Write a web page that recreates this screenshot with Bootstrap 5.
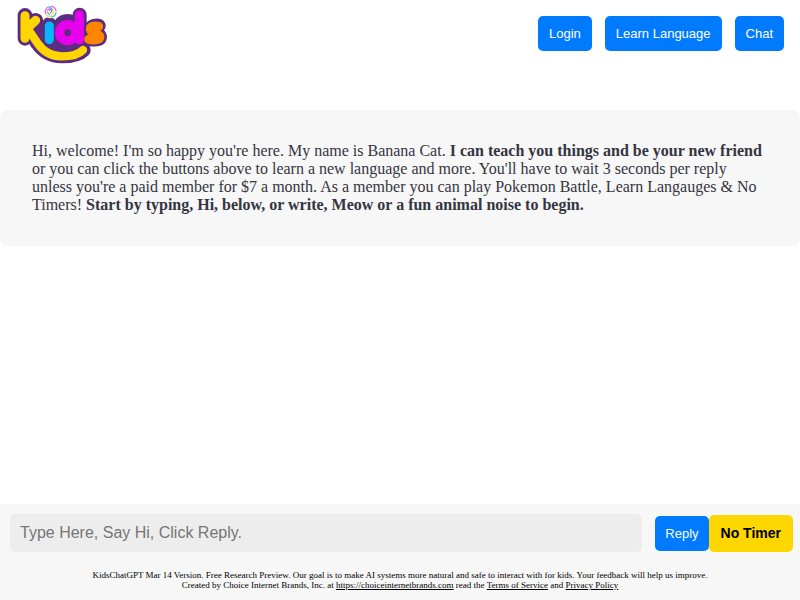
<!DOCTYPE html>
<html lang="en">
<head>
<meta charset="utf-8">
<meta name="viewport" content="width=device-width, initial-scale=1">
<title>KidsChatGPT</title>
<link href="https://cdn.jsdelivr.net/npm/bootstrap@5.3.0/dist/css/bootstrap.min.css" rel="stylesheet">
<style>
body { font-family: "Liberation Serif", "Times New Roman", serif; background: #fff; color: #000; }
.site-bar { padding: 0 16px 0 10px; min-height: 70px; }
.logo-art { width: 104px; height: 70px; }
.site-actions { gap: 13px; padding-top: 16px; }
.chat-btn { font: 13px/15px "Liberation Sans", Arial, sans-serif; color: #fff; background: #007bff; border: 0; border-radius: 5px; padding: 10px; white-space: nowrap; }
.site-actions .chat-btn { padding: 10px 11px; }
.chat-btn:hover { background: #0069d9; }
.timer-btn { font-size: 14px; line-height: 17px; font-weight: bold; color: #000; background: gold; padding: 10px 12px; }
.timer-btn:hover { background: #f0ca00; }
.welcome { margin-top: 40px; background: #f7f7f7; color: #343541; border-radius: 8px; padding: 32px; font-size: 16px; line-height: 18px; }
.composer { background: #f7f7f7; padding: 10px 0; }
.composer-row { padding: 0 7px 0 10px; }
.message-box { font: 16px/18px "Liberation Sans", Arial, sans-serif; background: #ededed; border: 0; border-radius: 5px; padding: 10px; min-width: 0; margin-right: 13px; }
.message-box::placeholder { color: #757575; }
.legal { font-size: 9px; line-height: 10px; margin-top: 18px; }
.legal a { color: #000; }
</style>
<script src="https://cdn.jsdelivr.net/npm/bootstrap@5.3.0/dist/js/bootstrap.bundle.min.js"></script>
</head>
<body class="d-flex flex-column min-vh-100">
<header class="site-bar d-flex justify-content-between align-items-start">
  <a href="#" aria-label="Kids home" class="d-block">
    <svg class="logo-art d-block" viewBox="0 0 312 210" fill="none" stroke-linecap="round" stroke-linejoin="round" aria-hidden="true">
      <g stroke="#5b2d82">
        <path stroke-width="44" d="M45 46V115M48 88L77 61M57 91L83 130Q110 168 155 168Q202 168 220 150"/>
        <path stroke-width="42" d="M118 72V119M209 44V119M198 100A27 27 0 1 0 148 100A27 27 0 1 0 198 100"/>
        <path stroke-width="42" d="M266 77Q241 75 243 89Q245 98 259 101Q274 106 268 116Q262 121 237 117"/>
        <path fill="#5b2d82" stroke-width="12" d="M48 50L80 66L210 70L260 90L250 115L210 134L180 164L115 162L72 127Z"/>
      </g>
      <path stroke="#ffd600" stroke-width="27" d="M45 47V115M48 88L77 61"/>
      <path stroke="#ffd600" stroke-width="25" d="M55 89L83 130Q110 169 155 169Q202 169 219 150"/>
      <path stroke="#08b5ff" stroke-width="27" d="M118 78V119"/>
      <path stroke="#e600ed" stroke-width="28" d="M208 45V119M197 98A24 24 0 1 0 149 98A24 24 0 1 0 197 98"/>
      <path fill="#e600ed" d="M188 75L209 62V130L188 120Z"/>
      <path stroke="#ff8500" stroke-width="27" d="M266 79Q240 75 241 88Q243 98 260 102Q274 106 268 116Q260 123 236 118"/>
      <circle cx="122" cy="35" r="20" fill="#fff"/>
      <g stroke-width="4">
        <path stroke="#e46ee9" d="M107 41Q103 27 115 21M124 19Q135 19 138 32M112 31Q120 22 128 29"/>
        <path stroke="#49c7ef" d="M117 20L125 25M138 37Q136 50 125 51M112 36L118 45"/>
        <path stroke="#ffdc45" d="M109 44Q117 56 125 47M127 31Q135 39 125 43"/>
        <path stroke="#8056ae" stroke-width="3" d="M117 31Q120 26 125 31Q126 37 120 39"/>
      </g>
    </svg>
  </a>
  <nav class="site-actions d-flex" aria-label="Main">
    <button type="button" class="chat-btn">Login</button>
    <button type="button" class="chat-btn">Learn Language</button>
    <button type="button" class="chat-btn">Chat</button>
  </nav>
</header>
<main class="flex-grow-1">
  <p class="welcome mb-0">Hi, welcome! I'm so happy you're here. My name is Banana Cat. <b>I can teach you things and be your new friend</b> or you can click the buttons above to learn a new language and more. You'll have to wait 3 seconds per reply unless you're a paid member for $7 a month. As a member you can play Pokemon Battle, Learn Langauges &amp; No Timers! <b>Start by typing, Hi, below, or write, Meow or a fun animal noise to begin.</b></p>
</main>
<footer class="composer sticky-bottom">
  <form class="composer-row d-flex align-items-center" onsubmit="return false">
    <input id="message" type="text" class="message-box flex-grow-1" aria-label="Message" placeholder="Type Here, Say Hi, Click Reply.">
    <button type="submit" class="chat-btn">Reply</button>
    <button type="button" class="chat-btn timer-btn">No Timer</button>
  </form>
  <p class="legal text-center mb-0">KidsChatGPT Mar 14 Version. Free Research Preview. Our goal is to make AI systems more natural and safe to interact with for kids. Your feedback will help us improve.<br>Created by Choice Internet Brands, Inc. at <a href="https://choiceinternetbrands.com">https://choiceinternetbrands.com</a> read the <a href="#terms">Terms of Service</a> and <a href="#privacy">Privacy Policy</a></p>
</footer>
</body>
</html>
